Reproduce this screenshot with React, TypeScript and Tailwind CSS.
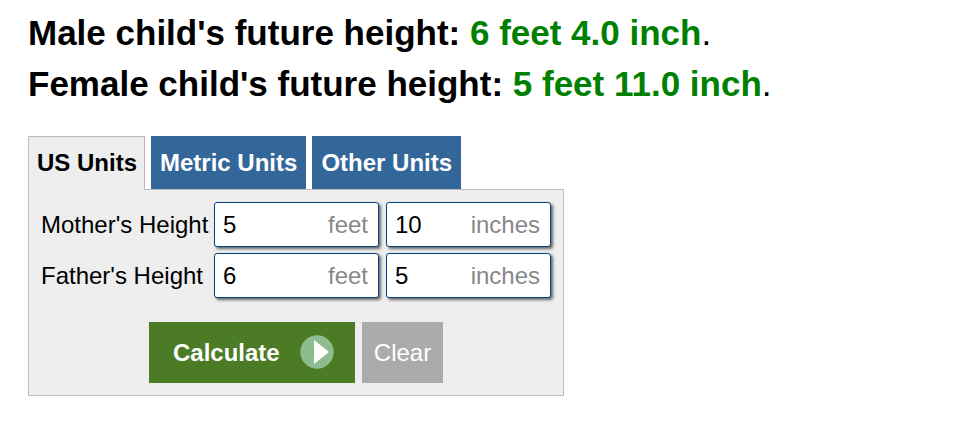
import { useState } from "react";

type Parent = {
  id: string;
  label: string;
  feet: string;
  inches: string;
};

const tabs = ["US Units", "Metric Units", "Other Units"];

const parents: Parent[] = [
  { id: "mother", label: "Mother's Height", feet: "5", inches: "10" },
  { id: "father", label: "Father's Height", feet: "6", inches: "5" },
];

type UnitInputProps = {
  id: string;
  label: string;
  unit: string;
  defaultValue: string;
};

function UnitInput({ id, label, unit, defaultValue }: UnitInputProps) {
  return (
    <div className="flex h-[45px] min-w-0 flex-1 items-center rounded-[3px] border border-[#044284] bg-white pr-[10px] pl-2 shadow-[2px_2px_3px_#666]">
      <input
        id={id}
        name={id}
        aria-label={label}
        defaultValue={defaultValue}
        className="w-0 min-w-0 flex-1 bg-transparent outline-none"
      />
      <span className="text-[#888]">{unit}</span>
    </div>
  );
}

export default function App() {
  const [active, setActive] = useState("US Units");

  return (
    <main className="px-7 pt-[7px] font-['Liberation_Sans',Arial,sans-serif] text-2xl text-black">
      {/* Results */}
      <div className="text-[35px] leading-[51px]">
        <p>
          <b>
            Male child's future height: <span className="text-[#008000]">6 feet 4.0 inch</span>
          </b>
          .
        </p>
        <p>
          <b>
            Female child's future height: <span className="text-[#008000]">5 feet 11.0 inch</span>
          </b>
          .
        </p>
      </div>

      {/* Tabs */}
      <div className="mt-[27px] flex gap-[6px]">
        {tabs.map((tab) => (
          <button
            key={tab}
            type="button"
            onClick={() => setActive(tab)}
            className={
              tab === active
                ? "z-10 -mb-px h-[54px] border border-b-0 border-[#bbb] bg-[#eee] pr-[7px] pb-[2px] pl-2 font-bold"
                : "h-[53px] bg-[#336699] px-[9px] font-bold text-white"
            }
          >
            {tab}
          </button>
        ))}
      </div>

      {/* Calculator */}
      <form
        onSubmit={(e) => e.preventDefault()}
        className="w-full max-w-[536px] border border-[#bbb] bg-[#eee] p-3"
      >
        <div className="flex flex-col gap-[6px]">
          {parents.map(({ id, label, feet, inches }) => (
            <div key={id} className="flex items-center">
              <label htmlFor={`${id}-feet`} className="w-[173px] whitespace-nowrap">
                {label}
              </label>
              <div className="flex min-w-0 flex-1 gap-[7px]">
                <UnitInput id={`${id}-feet`} label={`${label} feet`} unit="feet" defaultValue={feet} />
                <UnitInput id={`${id}-inches`} label={`${label} inches`} unit="inches" defaultValue={inches} />
              </div>
            </div>
          ))}
        </div>

        {/* Actions */}
        <div className="mt-6 flex justify-center gap-[7px]">
          <button
            type="submit"
            className="flex h-[61px] w-[206px] items-center justify-between bg-[#4c7b25] pr-[21px] pl-6 font-bold text-white"
          >
            Calculate
            <svg viewBox="0 0 34 34" className="mb-px size-[34px]" aria-hidden="true">
              <circle cx="17" cy="17" r="16.7" fill="#8fbc8f" />
              <path d="M14 5 L29 17 L14 29 Z" fill="#fff" />
            </svg>
          </button>
          <button type="reset" className="h-[61px] w-[81px] bg-[#ababab] text-white">
            Clear
          </button>
        </div>
      </form>
    </main>
  );
}
